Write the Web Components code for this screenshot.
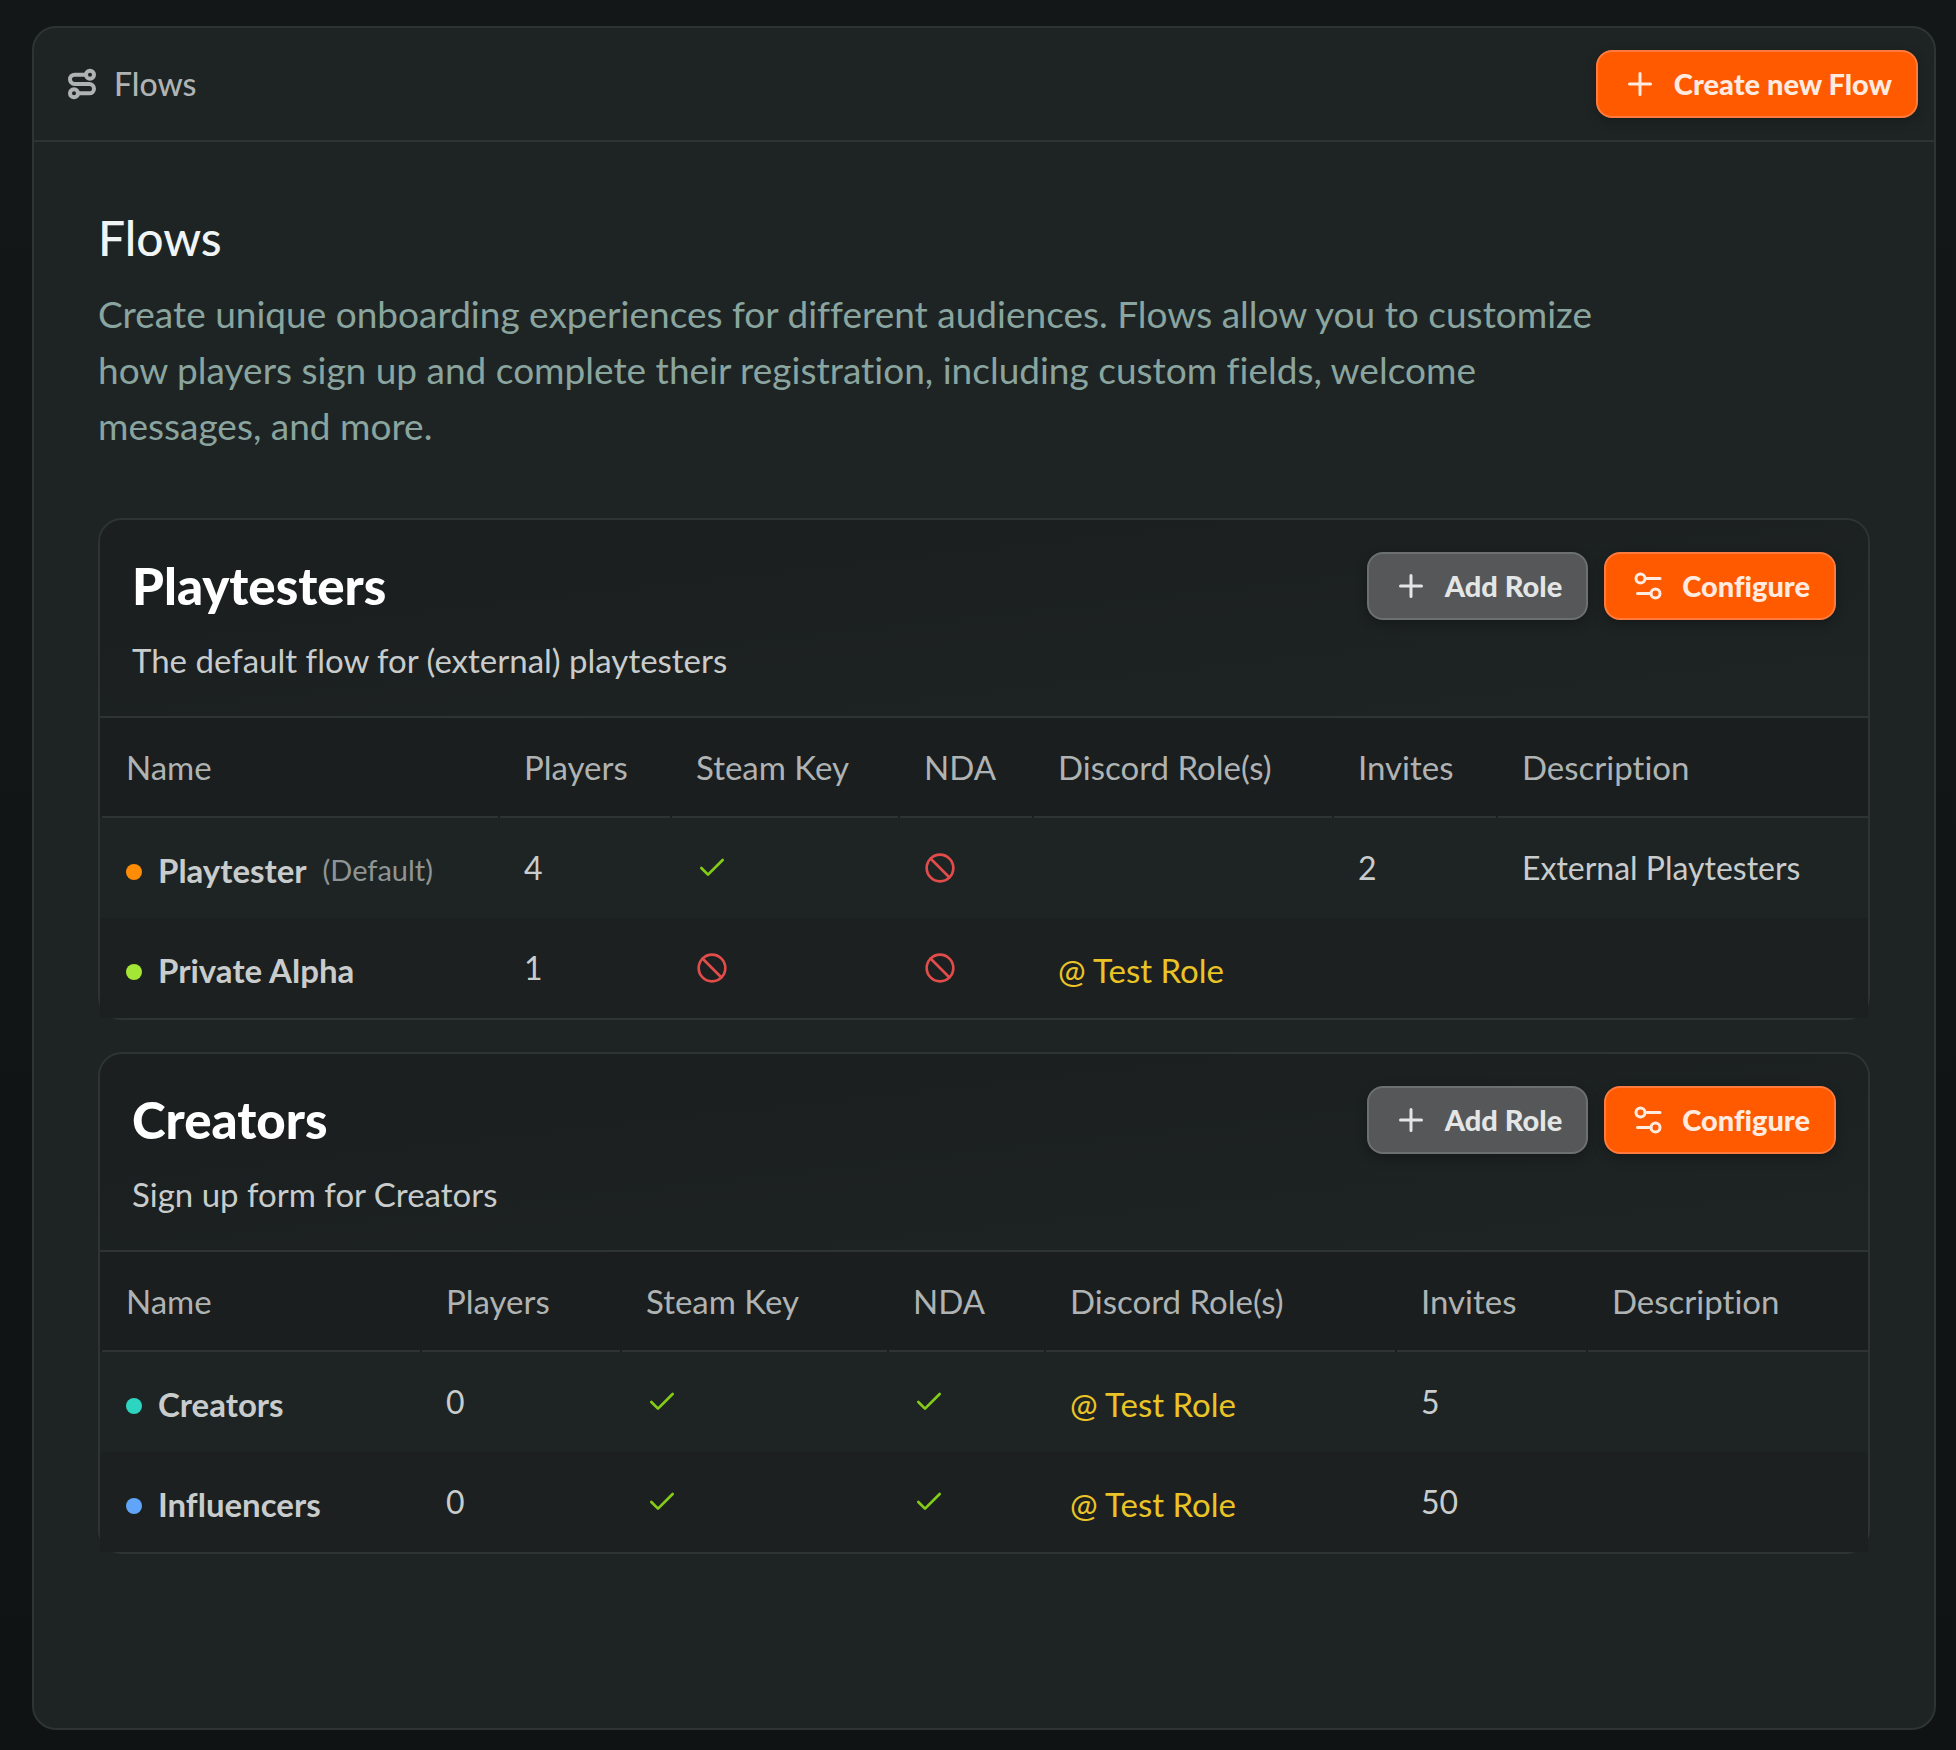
<!DOCTYPE html>
<html lang="en">
<head>
<meta charset="utf-8">
<title>Flows</title>
<style>
  html { height: 100%; }
  body {
    margin: 0;
    min-height: 100%;
    box-sizing: border-box;
    display: flex;
    flex-direction: column;
    padding: 26px 20px 20px 32px;
    background: linear-gradient(#131717, #101313);
    font-family: Lato, "Liberation Sans", sans-serif;
    font-size: 32px;
    line-height: 40px;
    font-variant-ligatures: none;
    --panel: #1e2424;
    --line: #2e3434;
    --head: #1a1e1e;
    --stripe: #1c2020;
    --muted: #b0b3b3;
    --text: #c9cccc;
  }
</style>
</head>
<body>
<flows-panel>
  <flow-icon slot="icon" name="route"></flow-icon>
  <span slot="name">Flows</span>
  <flow-button slot="action" icon="plus" variant="primary">Create new Flow</flow-button>
  <flows-intro>
    <span slot="title">Flows</span>
    Create unique onboarding experiences for different audiences. Flows allow you to customize how players sign up and complete their registration, including custom fields, welcome messages, and more.
  </flows-intro>
  <flow-card cols="398 172 228 134 300 164 372" data-flow="playtesters">
    <span slot="title">Playtesters</span>
    <span slot="subtitle">The default flow for (external) playtesters</span>
  </flow-card>
  <flow-card cols="320 200 267 157 351 191 282" data-flow="creators">
    <span slot="title">Creators</span>
    <span slot="subtitle">Sign up form for Creators</span>
  </flow-card>
</flows-panel>

<script>
const FLOWS = {
  playtesters: [
    { name: 'Playtester', isDefault: true, color: '#ff8c05', players: 4, key: true, nda: false, role: '', invites: '2', desc: 'External Playtesters' },
    { name: 'Private Alpha', color: '#a3e635', players: 1, key: false, nda: false, role: 'Test Role', invites: '', desc: '' }
  ],
  creators: [
    { name: 'Creators', color: '#2dd4bf', players: 0, key: true, nda: true, role: 'Test Role', invites: '5', desc: '' },
    { name: 'Influencers', color: '#60a5fa', players: 0, key: true, nda: true, role: 'Test Role', invites: '50', desc: '' }
  ]
};

const ICONS = {
  route: '<circle cx="6" cy="19" r="3"/><path d="M9 19h8.5a3.5 3.5 0 0 0 0-7h-11a3.5 3.5 0 0 1 0-7H15"/><circle cx="18" cy="5" r="3"/>',
  plus: '<path d="M5 12h14M12 5v14"/>',
  sliders: '<path d="M20 7h-9M14 17H5"/><circle cx="17" cy="17" r="3"/><circle cx="7" cy="7" r="3"/>',
  check: '<path d="M20 6 9 17l-5-5"/>',
  ban: '<circle cx="12" cy="12" r="10"/><path d="m4.9 4.9 14.2 14.2"/>'
};

class FlowIcon extends HTMLElement {
  connectedCallback() {
    const name = this.getAttribute('name');
    this.attachShadow({ mode: 'open' }).innerHTML = `
      <style>
        :host { display: block; width: 32px; height: 32px; flex: none; }
        :host([name="route"]) { --stroke: 3; }
        :host([name="plus"]), :host([name="sliders"]) { width: 36px; height: 36px; --stroke: 2; }
        :host([name="check"]) { color: #84cc16; }
        :host([name="ban"]) { color: #e24c4a; }
        svg { display: block; width: 100%; height: 100%; fill: none; stroke: currentColor;
          stroke-width: var(--stroke, 2); stroke-linecap: round; stroke-linejoin: round; }
      </style>
      <svg viewBox="0 0 24 24" aria-hidden="true">${ICONS[name]}</svg>`;
  }
}

class FlowButton extends HTMLElement {
  connectedCallback() {
    this.attachShadow({ mode: 'open' }).innerHTML = `
      <style>
        :host { display: block; flex: none; }
        button { display: flex; align-items: center; gap: 16px; height: 68px; margin: 0; padding: 0 24px;
          box-sizing: border-box; border: 2px solid #6c7070; border-radius: 16px; background: #555758;
          color: #e4e6e6; font: 900 29px/32px Lato, "Liberation Sans", sans-serif; font-variant-ligatures: none;
          white-space: nowrap; box-shadow: 0 4px 12px rgba(0, 0, 0, .25); cursor: pointer; }
        :host([variant="primary"]) button { background: #ff5a00; border-color: #ff7b3d; color: #ffebe0; }
      </style>
      <button type="button"><flow-icon name="${this.getAttribute('icon')}"></flow-icon><span><slot></slot></span></button>`;
  }
}

class FlowsPanel extends HTMLElement {
  connectedCallback() {
    this.attachShadow({ mode: 'open' }).innerHTML = `
      <style>
        :host { display: flex; flex-direction: column; flex: 1; border: 2px solid var(--line); border-radius: 24px;
          background: var(--panel); }
        header { display: flex; align-items: center; justify-content: space-between; height: 112px;
          padding: 0 16px 0 32px; border-bottom: 2px solid var(--line); }
        .name { display: flex; align-items: center; gap: 16px; color: var(--muted); font-weight: 500; }
        main { display: flex; flex-direction: column; gap: 32px; padding: 64px; }
      </style>
      <header>
        <div class="name"><slot name="icon"></slot><slot name="name"></slot></div>
        <slot name="action"></slot>
      </header>
      <main><slot></slot></main>`;
  }
}

class FlowsIntro extends HTMLElement {
  connectedCallback() {
    this.attachShadow({ mode: 'open' }).innerHTML = `
      <style>
        :host { display: block; padding-bottom: 32px; }
        h1 { margin: 0 0 16px; font-size: 48px; line-height: 64px; font-weight: 500; color: #f0f4f4; }
        p { margin: 0; max-width: 1520px; font-size: 37px; line-height: 56px; color: #8aa59f; }
      </style>
      <h1><slot name="title"></slot></h1>
      <p><slot></slot></p>`;
  }
}

class FlowCard extends HTMLElement {
  connectedCallback() {
    const cols = this.getAttribute('cols').split(' ').map(w => `<col style="width:${w}px">`).join('');
    const flag = on => on
      ? '<flow-icon name="check" role="img" aria-label="Yes"></flow-icon>'
      : '<flow-icon name="ban" role="img" aria-label="No"></flow-icon>';
    const rows = FLOWS[this.dataset.flow].map(r => `
      <tr>
        <td><div class="who"><i style="background:${r.color}"></i><b>${r.name}</b>${r.isDefault ? '<small>(Default)</small>' : ''}</div></td>
        <td>${r.players}</td>
        <td>${flag(r.key)}</td>
        <td>${flag(r.nda)}</td>
        <td>${r.role ? `<div class="role">@ ${r.role}</div>` : ''}</td>
        <td>${r.invites}</td>
        <td>${r.desc}</td>
      </tr>`).join('');
    this.attachShadow({ mode: 'open' }).innerHTML = `
      <style>
        :host { display: block; border: 2px solid var(--line); border-radius: 24px; }
        header { display: flex; justify-content: space-between; align-items: flex-start; height: 196px;
          box-sizing: border-box; padding: 32px; border-radius: 22px 22px 0 0;
          background: linear-gradient(to bottom right, #1b1f1f 30%, var(--panel)); }
        h2 { margin: 0 0 20px; font-size: 51px; line-height: 68px; font-weight: 900; color: #fff; }
        p { margin: 0; font-size: 33px; color: var(--text); }
        .actions { display: flex; gap: 16px; }
        table { width: 100%; table-layout: fixed; border-collapse: separate; border-spacing: 0;
          border-top: 2px solid var(--line); }
        th, td { height: 100px; box-sizing: border-box; padding: 0 0 0 26px; text-align: left; vertical-align: middle;
          white-space: nowrap; }
        th { padding-bottom: 2px; color: var(--muted); font-size: 33px; font-weight: 400;
          background: linear-gradient(var(--line), var(--line)) right bottom / calc(100% - 2px) 2px no-repeat var(--head); }
        td { color: var(--text); }
        tbody tr:nth-child(even) { background: var(--stripe); }
        .who { display: flex; align-items: center; padding-top: 4px; }
        i { width: 16px; height: 16px; margin: 4px 16px 0 0; border-radius: 50%; }
        b { font-size: 33px; font-weight: 700; }
        small { margin-left: 16px; font-size: 29px; color: #8f9494; }
        .role { padding-top: 4px; font-size: 33px; color: #eac426; }
      </style>
      <header>
        <div><h2><slot name="title"></slot></h2><p><slot name="subtitle"></slot></p></div>
        <div class="actions">
          <flow-button icon="plus">Add Role</flow-button>
          <flow-button icon="sliders" variant="primary">Configure</flow-button>
        </div>
      </header>
      <table>
        <colgroup>${cols}</colgroup>
        <thead><tr><th>Name</th><th>Players</th><th>Steam Key</th><th>NDA</th><th>Discord Role(s)</th><th>Invites</th><th>Description</th></tr></thead>
        <tbody>${rows}</tbody>
      </table>`;
  }
}

customElements.define('flow-icon', FlowIcon);
customElements.define('flow-button', FlowButton);
customElements.define('flows-panel', FlowsPanel);
customElements.define('flows-intro', FlowsIntro);
customElements.define('flow-card', FlowCard);
</script>
</body>
</html>
